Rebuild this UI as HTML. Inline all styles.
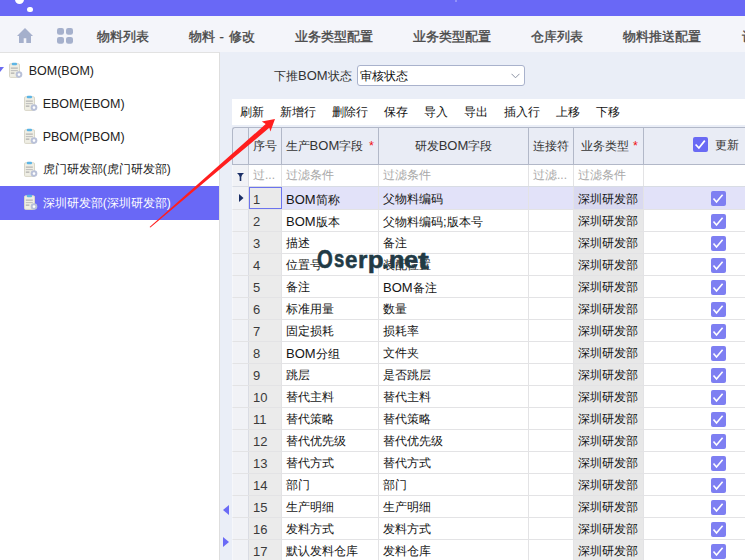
<!DOCTYPE html>
<html><head><meta charset="utf-8">
<style>
*{margin:0;padding:0;box-sizing:border-box}
html,body{width:745px;height:560px;overflow:hidden;background:#fff;font-family:"Liberation Sans",sans-serif;font-size:12px;color:#222}
.abs{position:absolute}
#top{left:0;top:0;width:745px;height:16px;background:#6968F6;overflow:hidden}
#top i{position:absolute;background:#fff;border-radius:50%}
#tabs{left:0;top:16px;width:745px;height:36px;background:#F4F5FA;overflow:hidden;white-space:nowrap}
#tabs .t{position:absolute;top:0.5px;height:36px;line-height:40px;font-size:13px;font-weight:500;color:#484848;-webkit-text-stroke:0.35px #484848}
#side{z-index:2;left:0;top:52px;width:220px;height:508px;background:#fff;border-top:1px solid #E2E2E2;border-right:1px solid #DEDEDE}
.node{position:absolute;left:0;width:219px;height:33px;line-height:33px;font-size:12px;color:#222;white-space:nowrap}
.node.sel{background:#6968F6;color:#fff;height:34px;line-height:34.5px}
.node.sel .doc{top:8px}
.doc{position:absolute;top:7.5px}
.node .lt{font-size:12.5px;transform:translateY(0.8px)}
#main{left:219px;top:53px;width:526px;height:507px;background:#EAEEF7}
#mainbg{left:220px;top:52px;width:525px;height:1px;background:#EAEEF7}
.lt{font-size:13px}

.tbi{position:absolute;top:0}
#grid{background:transparent}
.hdr,.flt,.row{position:absolute;left:0;width:531px}
.hdr{top:0;height:38px;background:#E9ECF5;border:1px solid #B2B8C8;border-right:none;border-top-left-radius:3px}
.flt,.row{border-left:1px solid #F6F7FA}
.flt{top:38px;height:22px;background:#fff;border-bottom:1px solid #D8DCE4;color:#A8A8A8}
.row{height:22px;border-bottom:1px solid #E3E3E5;background:#fff}
.row .c{padding-top:1px}
.row.cur{height:23px}
.row.cur{background:#E2E2F9}
.c{position:absolute;top:0;height:100%;white-space:nowrap;overflow:hidden}
.hdr .c{border-right:1px solid #B2B8C8;line-height:36px;color:#333;text-align:center}
.flt .c,.row .c{border-right:1px solid #E3E3E5;line-height:21px;padding-left:4px;color:#151515}
.flt .c{color:#A8A8A8}
.c0{left:0;width:16px}
.c1{left:16px;width:33px}
.c2{left:49px;width:97px}
.c3{left:146px;width:150px}
.c4{left:296px;width:45px}
.c5{left:341px;width:70px}
.c6{left:411px;width:120px;border-right:none!important}
.row .c0,.flt .c0{background:#F1F2F6;border-right:1px solid #DADCE3}
.row .c1{background:#EBEBEB;color:#3a3a3a!important}
.row.cur .c1{background:#EAEAEA}
.row .c5{background:#E8E8E8}
.row.cur .c5{background:#D9D9F0}
.foc{outline:1px solid #6C73EE;outline-offset:-1px}
.row.cur .c{padding-top:1.5px}
.ck{position:absolute;left:67px;top:4px;line-height:0}
.row.cur .ck{top:4px}
.hck{position:absolute;left:49px;top:9px;line-height:0}
.req{color:#F01010;margin-left:1.5px;font-size:12.5px}
.hdr .c2,.hdr .c5{text-align:left}
.hdr .c2{padding-left:3.6px}
.hdr .c2 .req{margin-left:2.5px}
.hdr .c5{padding-left:6.7px}
.hdr .c5 .req{margin-left:1px}
#wm span{position:absolute;font-family:'Liberation Sans',sans-serif;font-weight:bold;font-size:26px;line-height:1;color:#213A45;-webkit-text-stroke:0.6px #213A45;transform-origin:0 0;white-space:nowrap}
</style></head><body>
<div id="top" class="abs"><i style="left:15px;top:-5.5px;width:9.2px;height:9.2px"></i><i style="left:27.2px;top:6.5px;width:5.6px;height:5.6px"></i><b style="position:absolute;left:455px;top:0;width:2px;height:2px;background:#9090F8"></b></div>
<div id="tabs" class="abs">
  <svg class="abs" style="left:17px;top:12px" width="16" height="15" viewBox="0 0 16 15"><path d="M8 0 L16 8 L14 8 L14 15 L9.3 15 L9.3 10.2 L6.7 10.2 L6.7 15 L2 15 L2 8 L0 8 Z" fill="#A5B0CC"/></svg>
  <svg class="abs" style="left:57px;top:12px" width="16" height="16" viewBox="0 0 16 16"><rect x="0" y="0" width="7" height="6.8" rx="2.2" fill="#A5B0CC"/><rect x="9" y="0" width="7" height="6.8" rx="2.2" fill="#A5B0CC"/><rect x="0" y="8.9" width="7" height="6.8" rx="2.2" fill="#A5B0CC"/><rect x="9" y="8.9" width="7" height="6.8" rx="2.2" fill="#A5B0CC"/></svg>
  <div class="t" style="left:97px">物料列表</div>
  <div class="t" style="left:189px">物料<span style="font-weight:normal;padding:0 1px"> - </span>修改</div>
  <div class="t" style="left:295px">业务类型配置</div>
  <div class="t" style="left:413px">业务类型配置</div>
  <div class="t" style="left:531px">仓库列表</div>
  <div class="t" style="left:623px">物料推送配置</div>
  <div class="t" style="left:741.5px">设置</div>
</div>
<div id="side" class="abs">
  <svg class="abs" style="left:0;top:14px" width="5" height="6" viewBox="0 0 5 6"><path d="M-4.5 0 L4 0 L0 5 Z" fill="#6B6BF0"/></svg>
  <div class="node" style="top:1px"><svg class="doc" style="left:7px" width="16" height="18" viewBox="0 0 16 18"><rect x="2.5" y="1.8" width="10" height="13.6" rx="1" fill="#EFEEE4" stroke="#D8D6C8" stroke-width="1"/><rect x="4.8" y="0.8" width="5.2" height="2.4" rx="1" fill="#5DB5E5"/><rect x="3.8" y="5.6" width="7" height="1" fill="#A8A8A8"/><rect x="3.8" y="8.1" width="7" height="1" fill="#BDBDBD"/><rect x="3.8" y="10.6" width="3.6" height="1" fill="#A0A0A0"/><circle cx="12" cy="12.6" r="3.3" fill="#B9C1D8"/><circle cx="12" cy="12.6" r="1.3" fill="#fff"/></svg><span style="position:absolute;left:28.7px" class="lt">BOM(BOM)</span></div>
  <div class="node" style="top:34px"><svg class="doc" style="left:22px" width="16" height="18" viewBox="0 0 16 18"><rect x="2.5" y="1.8" width="10" height="13.6" rx="1" fill="#EFEEE4" stroke="#D8D6C8" stroke-width="1"/><rect x="4.8" y="0.8" width="5.2" height="2.4" rx="1" fill="#5DB5E5"/><rect x="3.8" y="5.6" width="7" height="1" fill="#A8A8A8"/><rect x="3.8" y="8.1" width="7" height="1" fill="#BDBDBD"/><rect x="3.8" y="10.6" width="3.6" height="1" fill="#A0A0A0"/><circle cx="12" cy="12.6" r="3.3" fill="#B9C1D8"/><circle cx="12" cy="12.6" r="1.3" fill="#fff"/></svg><span style="position:absolute;left:42.7px" class="lt">EBOM(EBOM)</span></div>
  <div class="node" style="top:67px"><svg class="doc" style="left:22px" width="16" height="18" viewBox="0 0 16 18"><rect x="2.5" y="1.8" width="10" height="13.6" rx="1" fill="#EFEEE4" stroke="#D8D6C8" stroke-width="1"/><rect x="4.8" y="0.8" width="5.2" height="2.4" rx="1" fill="#5DB5E5"/><rect x="3.8" y="5.6" width="7" height="1" fill="#A8A8A8"/><rect x="3.8" y="8.1" width="7" height="1" fill="#BDBDBD"/><rect x="3.8" y="10.6" width="3.6" height="1" fill="#A0A0A0"/><circle cx="12" cy="12.6" r="3.3" fill="#B9C1D8"/><circle cx="12" cy="12.6" r="1.3" fill="#fff"/></svg><span style="position:absolute;left:42.7px" class="lt">PBOM(PBOM)</span></div>
  <div class="node" style="top:100px"><svg class="doc" style="left:22px" width="16" height="18" viewBox="0 0 16 18"><rect x="2.5" y="1.8" width="10" height="13.6" rx="1" fill="#EFEEE4" stroke="#D8D6C8" stroke-width="1"/><rect x="4.8" y="0.8" width="5.2" height="2.4" rx="1" fill="#5DB5E5"/><rect x="3.8" y="5.6" width="7" height="1" fill="#A8A8A8"/><rect x="3.8" y="8.1" width="7" height="1" fill="#BDBDBD"/><rect x="3.8" y="10.6" width="3.6" height="1" fill="#A0A0A0"/><circle cx="12" cy="12.6" r="3.3" fill="#B9C1D8"/><circle cx="12" cy="12.6" r="1.3" fill="#fff"/></svg><span style="position:absolute;left:42.7px">虎门研发部(虎门研发部)</span></div>
  <div class="node sel" style="top:133px"><svg class="doc" style="left:22px" width="16" height="18" viewBox="0 0 16 18"><rect x="2.5" y="1.8" width="10" height="13.6" rx="1" fill="#EFEEE4" stroke="#D8D6C8" stroke-width="1"/><rect x="4.8" y="0.8" width="5.2" height="2.4" rx="1" fill="#5DB5E5"/><rect x="3.8" y="5.6" width="7" height="1" fill="#A8A8A8"/><rect x="3.8" y="8.1" width="7" height="1" fill="#BDBDBD"/><rect x="3.8" y="10.6" width="3.6" height="1" fill="#A0A0A0"/><circle cx="12" cy="12.6" r="3.3" fill="#B9C1D8"/><circle cx="12" cy="12.6" r="1.3" fill="#fff"/></svg><span style="position:absolute;left:42.7px">深圳研发部(深圳研发部)</span></div>
</div>
<div id="mainbg" class="abs"></div>
<div id="main" class="abs">
  <div class="abs" style="left:55px;top:14px;line-height:18px;color:#333">下推<span class="lt">BOM</span>状态</div>
  <div class="abs" id="sel" style="left:138px;top:12px;width:168px;height:21px;background:#fff;border:1px solid #A9B2CC;border-radius:3px;line-height:20px;padding-left:1.5px;color:#111">审核状态
    <svg class="abs" style="left:153px;top:7px" width="9" height="6" viewBox="0 0 9 6"><path d="M0.5 0.8 L4.5 4.8 L8.5 0.8" stroke="#8C93A3" stroke-width="1" fill="none"/></svg></div>
  <div class="abs" id="tb" style="left:13px;padding-left:1px;top:46px;width:513px;height:26px;background:#fff;white-space:nowrap;color:#111;line-height:26px">
    <span class="tbi" style="left:8px">刷新</span><span class="tbi" style="left:48px">新增行</span><span class="tbi" style="left:100px">删除行</span><span class="tbi" style="left:152px">保存</span><span class="tbi" style="left:192px">导入</span><span class="tbi" style="left:232px">导出</span><span class="tbi" style="left:272px">插入行</span><span class="tbi" style="left:324px">上移</span><span class="tbi" style="left:364px">下移</span>
  </div>
  <div class="abs" id="grid" style="left:13px;top:74px;width:530px;height:440px">
    <div class="hdr"><div class="c c0"></div><div class="c c1">序号</div><div class="c c2">生产<span class="lt">BOM</span>字段 <span class="req">*</span></div><div class="c c3"><span>研发<span class="lt">BOM</span>字段</span></div><div class="c c4">连接符</div><div class="c c5">业务类型 <span class="req">*</span></div><div class="c c6"><span class="hck"><svg width="15" height="15" viewBox="0 0 15 15"><rect width="15" height="15" rx="2" fill="#6A6AF4"/><path d="M2.6 7.5 L5.9 11 L11.8 3.6" stroke="#fff" stroke-width="1.7" fill="none"/></svg></span><span class="abs" style="left:71px;top:-0.7px">更新</span></div></div>
    <div class="flt"><div class="c c0"><svg class="abs" style="left:4px;top:7.5px" width="7" height="8" viewBox="0 0 7 8"><path d="M0 0 H7 Q4.5 2 4.3 4 V8 H2.7 V4 Q2.5 2 0 0 Z" fill="#1A2E66"/></svg></div><div class="c c1">过...</div><div class="c c2">过滤条件</div><div class="c c3">过滤条件</div><div class="c c4">过滤...</div><div class="c c5">过滤条件</div><div class="c c6"></div></div>
    <div class="row cur" style="top:60px"><div class="c c0"><svg class="abs" style="left:5.8px;top:6.8px" width="5" height="9" viewBox="0 0 5 9"><path d="M0 0 L4.5 4 L0 8 Z" fill="#1A2E66"/></svg></div><div class="c c1 foc"><span class="lt">1</span></div><div class="c c2"><span class="lt">BOM</span>简称</div><div class="c c3">父物料编码</div><div class="c c4"></div><div class="c c5">深圳研发部</div><div class="c c6"><span class="ck"><svg width="15" height="15" viewBox="0 0 15 15"><rect width="15" height="15" rx="2" fill="#7E7FF2"/><path d="M2.5 7.5 L5.5 11 L11.6 3.8" stroke="#fff" stroke-width="1.6" fill="none"/></svg></span></div></div>
    <div class="row" style="top:83px"><div class="c c0"></div><div class="c c1"><span class="lt">2</span></div><div class="c c2"><span class="lt">BOM</span>版本</div><div class="c c3">父物料编码<span class="lt">;</span>版本号</div><div class="c c4"></div><div class="c c5">深圳研发部</div><div class="c c6"><span class="ck"><svg width="15" height="15" viewBox="0 0 15 15"><rect width="15" height="15" rx="2" fill="#7E7FF2"/><path d="M2.5 7.5 L5.5 11 L11.6 3.8" stroke="#fff" stroke-width="1.6" fill="none"/></svg></span></div></div>
    <div class="row" style="top:105px"><div class="c c0"></div><div class="c c1"><span class="lt">3</span></div><div class="c c2">描述</div><div class="c c3">备注</div><div class="c c4"></div><div class="c c5">深圳研发部</div><div class="c c6"><span class="ck"><svg width="15" height="15" viewBox="0 0 15 15"><rect width="15" height="15" rx="2" fill="#7E7FF2"/><path d="M2.5 7.5 L5.5 11 L11.6 3.8" stroke="#fff" stroke-width="1.6" fill="none"/></svg></span></div></div>
    <div class="row" style="top:127px"><div class="c c0"></div><div class="c c1"><span class="lt">4</span></div><div class="c c2">位置号</div><div class="c c3">装配位置</div><div class="c c4"></div><div class="c c5">深圳研发部</div><div class="c c6"><span class="ck"><svg width="15" height="15" viewBox="0 0 15 15"><rect width="15" height="15" rx="2" fill="#7E7FF2"/><path d="M2.5 7.5 L5.5 11 L11.6 3.8" stroke="#fff" stroke-width="1.6" fill="none"/></svg></span></div></div>
    <div class="row" style="top:149px"><div class="c c0"></div><div class="c c1"><span class="lt">5</span></div><div class="c c2">备注</div><div class="c c3"><span class="lt">BOM</span>备注</div><div class="c c4"></div><div class="c c5">深圳研发部</div><div class="c c6"><span class="ck"><svg width="15" height="15" viewBox="0 0 15 15"><rect width="15" height="15" rx="2" fill="#7E7FF2"/><path d="M2.5 7.5 L5.5 11 L11.6 3.8" stroke="#fff" stroke-width="1.6" fill="none"/></svg></span></div></div>
    <div class="row" style="top:171px"><div class="c c0"></div><div class="c c1"><span class="lt">6</span></div><div class="c c2">标准用量</div><div class="c c3">数量</div><div class="c c4"></div><div class="c c5">深圳研发部</div><div class="c c6"><span class="ck"><svg width="15" height="15" viewBox="0 0 15 15"><rect width="15" height="15" rx="2" fill="#7E7FF2"/><path d="M2.5 7.5 L5.5 11 L11.6 3.8" stroke="#fff" stroke-width="1.6" fill="none"/></svg></span></div></div>
    <div class="row" style="top:193px"><div class="c c0"></div><div class="c c1"><span class="lt">7</span></div><div class="c c2">固定损耗</div><div class="c c3">损耗率</div><div class="c c4"></div><div class="c c5">深圳研发部</div><div class="c c6"><span class="ck"><svg width="15" height="15" viewBox="0 0 15 15"><rect width="15" height="15" rx="2" fill="#7E7FF2"/><path d="M2.5 7.5 L5.5 11 L11.6 3.8" stroke="#fff" stroke-width="1.6" fill="none"/></svg></span></div></div>
    <div class="row" style="top:215px"><div class="c c0"></div><div class="c c1"><span class="lt">8</span></div><div class="c c2"><span class="lt">BOM</span>分组</div><div class="c c3">文件夹</div><div class="c c4"></div><div class="c c5">深圳研发部</div><div class="c c6"><span class="ck"><svg width="15" height="15" viewBox="0 0 15 15"><rect width="15" height="15" rx="2" fill="#7E7FF2"/><path d="M2.5 7.5 L5.5 11 L11.6 3.8" stroke="#fff" stroke-width="1.6" fill="none"/></svg></span></div></div>
    <div class="row" style="top:237px"><div class="c c0"></div><div class="c c1"><span class="lt">9</span></div><div class="c c2">跳层</div><div class="c c3">是否跳层</div><div class="c c4"></div><div class="c c5">深圳研发部</div><div class="c c6"><span class="ck"><svg width="15" height="15" viewBox="0 0 15 15"><rect width="15" height="15" rx="2" fill="#7E7FF2"/><path d="M2.5 7.5 L5.5 11 L11.6 3.8" stroke="#fff" stroke-width="1.6" fill="none"/></svg></span></div></div>
    <div class="row" style="top:259px"><div class="c c0"></div><div class="c c1"><span class="lt">10</span></div><div class="c c2">替代主料</div><div class="c c3">替代主料</div><div class="c c4"></div><div class="c c5">深圳研发部</div><div class="c c6"><span class="ck"><svg width="15" height="15" viewBox="0 0 15 15"><rect width="15" height="15" rx="2" fill="#7E7FF2"/><path d="M2.5 7.5 L5.5 11 L11.6 3.8" stroke="#fff" stroke-width="1.6" fill="none"/></svg></span></div></div>
    <div class="row" style="top:281px"><div class="c c0"></div><div class="c c1"><span class="lt">11</span></div><div class="c c2">替代策略</div><div class="c c3">替代策略</div><div class="c c4"></div><div class="c c5">深圳研发部</div><div class="c c6"><span class="ck"><svg width="15" height="15" viewBox="0 0 15 15"><rect width="15" height="15" rx="2" fill="#7E7FF2"/><path d="M2.5 7.5 L5.5 11 L11.6 3.8" stroke="#fff" stroke-width="1.6" fill="none"/></svg></span></div></div>
    <div class="row" style="top:303px"><div class="c c0"></div><div class="c c1"><span class="lt">12</span></div><div class="c c2">替代优先级</div><div class="c c3">替代优先级</div><div class="c c4"></div><div class="c c5">深圳研发部</div><div class="c c6"><span class="ck"><svg width="15" height="15" viewBox="0 0 15 15"><rect width="15" height="15" rx="2" fill="#7E7FF2"/><path d="M2.5 7.5 L5.5 11 L11.6 3.8" stroke="#fff" stroke-width="1.6" fill="none"/></svg></span></div></div>
    <div class="row" style="top:325px"><div class="c c0"></div><div class="c c1"><span class="lt">13</span></div><div class="c c2">替代方式</div><div class="c c3">替代方式</div><div class="c c4"></div><div class="c c5">深圳研发部</div><div class="c c6"><span class="ck"><svg width="15" height="15" viewBox="0 0 15 15"><rect width="15" height="15" rx="2" fill="#7E7FF2"/><path d="M2.5 7.5 L5.5 11 L11.6 3.8" stroke="#fff" stroke-width="1.6" fill="none"/></svg></span></div></div>
    <div class="row" style="top:347px"><div class="c c0"></div><div class="c c1"><span class="lt">14</span></div><div class="c c2">部门</div><div class="c c3">部门</div><div class="c c4"></div><div class="c c5">深圳研发部</div><div class="c c6"><span class="ck"><svg width="15" height="15" viewBox="0 0 15 15"><rect width="15" height="15" rx="2" fill="#7E7FF2"/><path d="M2.5 7.5 L5.5 11 L11.6 3.8" stroke="#fff" stroke-width="1.6" fill="none"/></svg></span></div></div>
    <div class="row" style="top:369px"><div class="c c0"></div><div class="c c1"><span class="lt">15</span></div><div class="c c2">生产明细</div><div class="c c3">生产明细</div><div class="c c4"></div><div class="c c5">深圳研发部</div><div class="c c6"><span class="ck"><svg width="15" height="15" viewBox="0 0 15 15"><rect width="15" height="15" rx="2" fill="#7E7FF2"/><path d="M2.5 7.5 L5.5 11 L11.6 3.8" stroke="#fff" stroke-width="1.6" fill="none"/></svg></span></div></div>
    <div class="row" style="top:391px"><div class="c c0"></div><div class="c c1"><span class="lt">16</span></div><div class="c c2">发料方式</div><div class="c c3">发料方式</div><div class="c c4"></div><div class="c c5">深圳研发部</div><div class="c c6"><span class="ck"><svg width="15" height="15" viewBox="0 0 15 15"><rect width="15" height="15" rx="2" fill="#7E7FF2"/><path d="M2.5 7.5 L5.5 11 L11.6 3.8" stroke="#fff" stroke-width="1.6" fill="none"/></svg></span></div></div>
    <div class="row" style="top:413px"><div class="c c0"></div><div class="c c1"><span class="lt">17</span></div><div class="c c2">默认发料仓库</div><div class="c c3">发料仓库</div><div class="c c4"></div><div class="c c5">深圳研发部</div><div class="c c6"><span class="ck"><svg width="15" height="15" viewBox="0 0 15 15"><rect width="15" height="15" rx="2" fill="#7E7FF2"/><path d="M2.5 7.5 L5.5 11 L11.6 3.8" stroke="#fff" stroke-width="1.6" fill="none"/></svg></span></div></div>
  </div>
  
  <svg class="abs" style="left:4px;top:452px" width="6" height="10" viewBox="0 0 6 10"><path d="M6 0 L0 5 L6 10 Z" fill="#6A6AF6"/></svg>
  <svg class="abs" style="left:4px;top:484px" width="6" height="10" viewBox="0 0 6 10"><path d="M0 0 L6 5 L0 10 Z" fill="#6A6AF6"/></svg>
</div>
<div id="wm" class="abs" style="left:0;top:0;z-index:4"><span style="left:316.98px;top:246.48px;transform:scale(0.780,0.979)">O</span><span style="left:333.67px;top:248.48px;transform:scale(0.710,0.886)">s</span><span style="left:345.20px;top:247.98px;transform:scale(0.856,0.912)">e</span><span style="left:358.20px;top:247.88px;transform:scale(0.930,0.925)">r</span><span style="left:367.80px;top:247.92px;transform:scale(1.000,0.920)">p</span><span style="left:381.98px;top:249.07px;transform:scale(0.881,0.867)">.</span><span style="left:389.43px;top:248.14px;transform:scale(0.977,0.904)">n</span><span style="left:403.62px;top:247.37px;transform:scale(0.977,0.939)">e</span><span style="left:418.30px;top:247.52px;transform:scale(1.244,0.933)">t</span></div>
<svg class="abs" style="left:0;top:0;z-index:5" width="745" height="560" viewBox="0 0 745 560"><path d="M275 118.9 L261.8 121.4 L265.7 124 L149.6 227 L150.4 227.6 L269.3 127.8 L270.4 131.4 Z" fill="#FF1E1E"/></svg>
</body></html>
